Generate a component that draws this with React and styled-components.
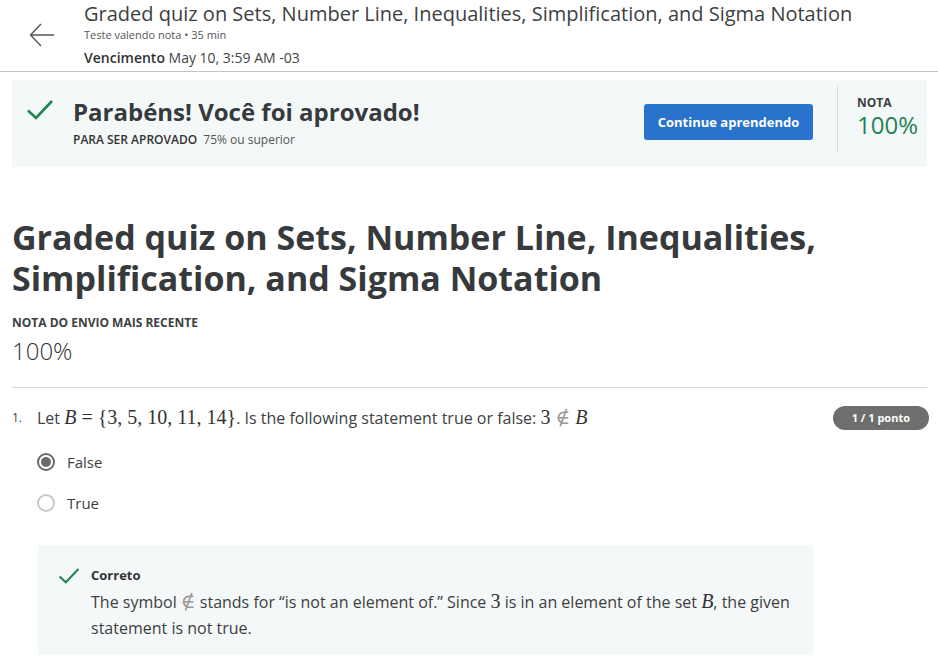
import React from 'react'
import styled, { createGlobalStyle } from 'styled-components'

const GlobalStyle = createGlobalStyle`
  body {
    margin: 0;
    background: #fff;
    font-family: 'Open Sans', 'Noto Sans', sans-serif;
    color: #373a3c;
  }
`

const CheckIcon = ({ size = 28 }) => (
  <svg width={size} height={size} viewBox='0 0 28 28' fill='none'>
    <path d='M2 14.5 L10 22 L26 5' stroke='#1f8354' strokeWidth='2.6' />
  </svg>
)

const App = () => {
  return (
    <Page>
      <GlobalStyle />
      {/* ====HEADER */}
      <Header>
        <BackButton aria-label='back'>
          <svg width='26' height='24' viewBox='0 0 26 24' fill='none'>
            <path d='M12 1 L1.5 12 L12 23 M1.5 12 H25' stroke='#555' strokeWidth='1.4' />
          </svg>
        </BackButton>
        <HeaderText>
          <HeaderTitle>Graded quiz on Sets, Number Line, Inequalities, Simplification, and Sigma Notation</HeaderTitle>
          <HeaderMeta>Teste valendo nota • 35 min</HeaderMeta>
          <HeaderDue>
            <b>Vencimento</b> May 10, 3:59 AM -03
          </HeaderDue>
        </HeaderText>
      </Header>

      <Content>
        {/* ====PASSED BANNER */}
        <Banner>
          <BannerCheck>
            <CheckIcon size={28} />
          </BannerCheck>
          <BannerText>
            <BannerTitle>Parabéns! Você foi aprovado!</BannerTitle>
            <BannerSub>
              <b>PARA SER APROVADO</b> 75% ou superior
            </BannerSub>
          </BannerText>
          <PrimaryButton>Continue aprendendo</PrimaryButton>
          <GradeBox>
            <SmallLabel>NOTA</SmallLabel>
            <GradeValue>100%</GradeValue>
          </GradeBox>
        </Banner>

        <PageTitle>Graded quiz on Sets, Number Line, Inequalities, Simplification, and Sigma Notation</PageTitle>
        <SmallLabel>NOTA DO ENVIO MAIS RECENTE</SmallLabel>
        <RecentGrade>100%</RecentGrade>
        <Divider />

        {/* ====QUESTION */}
        <Question>
          <QNumber>1.</QNumber>
          <QBody>
            <QRow>
              <QText>
                Let <M><i>B</i> = {'{'}3, 5, 10, 11, 14{'}'}</M>. Is the following statement true or false:{' '}
                <M>3 <Faint>∉</Faint> <i>B</i></M>
              </QText>
              <Badge>1 / 1 ponto</Badge>
            </QRow>
            <Options>
              <Option>
                <Radio checked />
                False
              </Option>
              <Option>
                <Radio />
                True
              </Option>
            </Options>
          </QBody>
        </Question>

        {/* ====FEEDBACK */}
        <Feedback>
          <FeedbackCheck>
            <CheckIcon size={22} />
          </FeedbackCheck>
          <div>
            <FeedbackTitle>Correto</FeedbackTitle>
            <FeedbackText>
              The symbol <M><Faint>∉</Faint></M> stands for “is not an element of.” Since <M>3</M> is in an element of the set{' '}
              <M><i>B</i></M>, the given statement is not true.
            </FeedbackText>
          </div>
        </Feedback>
      </Content>
    </Page>
  )
}

const Page = styled.div`
  width: 938px;
`
const Header = styled.header`
  display: flex;
  align-items: flex-start;
  height: 72px;
  border-bottom: 1px solid #c4c4c4;
  box-sizing: border-box;
`
const BackButton = styled.div`
  width: 84px;
  flex-shrink: 0;
  padding: 23px 0 0 29px;
  box-sizing: border-box;
`
const HeaderText = styled.div`
  padding-top: 2px;
`
const HeaderTitle = styled.div`
  font-size: 20px;
  line-height: 24px;
  color: #3d3f41;
`
const HeaderMeta = styled.div`
  font-size: 11px;
  line-height: 18px;
  color: #555;
`
const HeaderDue = styled.div`
  font-size: 14px;
  line-height: 24px;
  margin-top: 2px;
  color: #444;
  b {
    font-weight: 600;
    color: #333;
  }
`
const Content = styled.main`
  padding: 8px 11px 0 12px;
`
const Banner = styled.section`
  display: flex;
  align-items: center;
  height: 87px;
  background: #f3f8f8;
  padding: 0 0 0 14px;
`
const BannerCheck = styled.div`
  display: flex;
  flex-shrink: 0;
  margin-right: 19px;
  margin-top: -28px;
`
const BannerText = styled.div`
  flex: 1;
  margin-top: -4px;
`
const BannerTitle = styled.div`
  font-size: 24px;
  font-weight: 700;
  line-height: 32px;
  color: #373a3c;
`
const BannerSub = styled.div`
  font-size: 12px;
  line-height: 16px;
  color: #555;
  margin-top: 4px;
  b {
    font-weight: 600;
    color: #333;
    margin-right: 3px;
  }
`
const PrimaryButton = styled.button`
  width: 169px;
  height: 36px;
  flex-shrink: 0;
  margin-top: -4px;
  border: none;
  border-radius: 3px;
  background: #2a73cc;
  color: #fff;
  font-family: inherit;
  font-size: 13px;
  font-weight: 700;
`
const GradeBox = styled.div`
  align-self: stretch;
  flex-shrink: 0;
  margin: 6px 0 14px 24px;
  padding: 9px 0 0 19px;
  border-left: 1px solid #d8dcdc;
  width: 70px;
`
const SmallLabel = styled.div`
  font-size: 12px;
  font-weight: 700;
  line-height: 16px;
  color: #3d3f41;
`
const GradeValue = styled.div`
  font-size: 24px;
  line-height: 28px;
  color: #1f8354;
`
const PageTitle = styled.h1`
  margin: 50px 0 16px;
  font-size: 34px;
  line-height: 41px;
  font-weight: 700;
  color: #373a3c;
`
const RecentGrade = styled.div`
  font-size: 24px;
  font-weight: 300;
  line-height: 30px;
  margin-top: 5px;
  color: #333;
`
const Divider = styled.hr`
  margin: 21px 0 0;
  border: none;
  border-top: 1px solid #dadada;
`
const Question = styled.div`
  display: flex;
  padding-top: 17px;
`
const QNumber = styled.div`
  width: 25px;
  flex-shrink: 0;
  font-size: 12px;
  line-height: 26px;
  color: #444;
`
const QBody = styled.div`
  flex: 1;
`
const QRow = styled.div`
  display: flex;
  align-items: center;
  justify-content: space-between;
`
const QText = styled.div`
  font-size: 16px;
  line-height: 26px;
  color: #3d3f41;
`
const M = styled.span`
  font-family: 'Liberation Serif', 'DejaVu Serif', serif;
  font-size: 20px;
  line-height: 1;
  color: #333;
  i {
    font-style: italic;
  }
`
const Faint = styled.span`
  color: #999;
`
const Badge = styled.span`
  background: #6e6e6e;
  color: #fff;
  font-size: 11px;
  font-weight: 700;
  padding: 4px 19px;
  border-radius: 12px;
  line-height: 16px;
  margin-right: -2px;
`
const Options = styled.div`
  display: flex;
  flex-direction: column;
  gap: 17px;
  margin-top: 19px;
`
const Option = styled.label`
  display: flex;
  align-items: center;
  gap: 12px;
  font-size: 15px;
  line-height: 24px;
  color: #3d3f41;
`
const Radio = styled.span`
  width: 18px;
  height: 18px;
  border-radius: 50%;
  box-sizing: border-box;
  border: 2px solid ${(p) => (p.checked ? '#6a6a6a' : '#c8c8c8')};
  display: flex;
  align-items: center;
  justify-content: center;
  &::after {
    content: '';
    display: ${(p) => (p.checked ? 'block' : 'none')};
    width: 10px;
    height: 10px;
    border-radius: 50%;
    background: #6a6a6a;
  }
`
const Feedback = styled.div`
  display: flex;
  margin: 30px 0 0 25px;
  width: 776px;
  box-sizing: border-box;
  background: #f5f8f8;
  padding: 20px 20px 14px 21px;
`
const FeedbackCheck = styled.div`
  width: 33px;
  flex-shrink: 0;
`
const FeedbackTitle = styled.div`
  font-size: 13px;
  font-weight: 700;
  line-height: 20px;
  color: #333;
`
const FeedbackText = styled.div`
  font-size: 16px;
  line-height: 26px;
  color: #3d3f41;
  margin-top: 4px;
`

export default App
